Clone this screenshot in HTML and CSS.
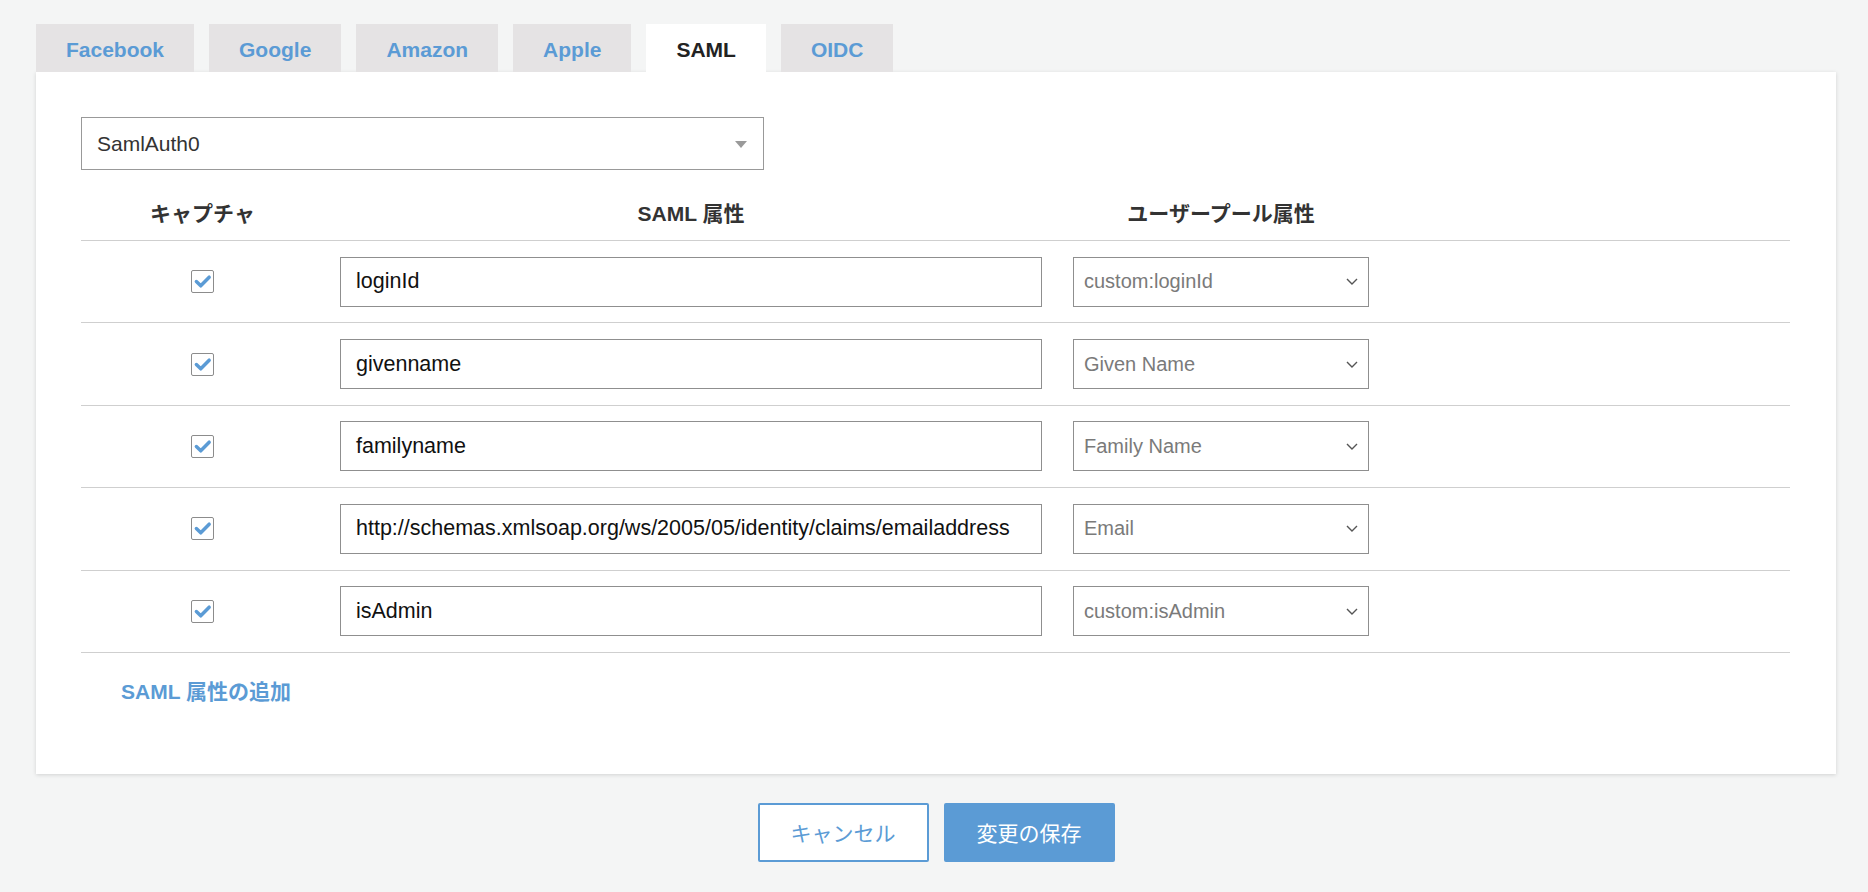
FILE: index.html
```html
<!DOCTYPE html>
<html lang="ja">
<head>
<meta charset="utf-8">
<title>SAML</title>
<link rel="stylesheet" href="styles.css">
</head>
<body>
<div class="page">
  <div class="tabs">
    <div class="tab">Facebook</div>
    <div class="tab">Google</div>
    <div class="tab">Amazon</div>
    <div class="tab">Apple</div>
    <div class="tab active">SAML</div>
    <div class="tab">OIDC</div>
  </div>
  <div class="card">
    <div class="provider-select">
      <span class="provider-value">SamlAuth0</span>
      <span class="caret"></span>
    </div>
    <div class="table">
      <div class="row head">
        <div class="cell c1">キャプチャ</div>
        <div class="cell c2">SAML 属性</div>
        <div class="cell c3">ユーザープール属性</div>
        <div class="cell"></div>
      </div>
      <div class="row">
        <div class="cell c1"><span class="checkbox"><svg viewBox="0 0 23 23" width="21" height="21"><path d="M4.8 11.5 L9.6 16.2 L18.8 6.8" fill="none" stroke="#5b9bd5" stroke-width="3.8" stroke-linecap="round" stroke-linejoin="round"/></svg></span></div>
        <div class="cell c2"><div class="text-input">loginId</div></div>
        <div class="cell c3"><div class="attr-select"><span>custom:loginId</span><svg class="chev" viewBox="0 0 12 7" width="12" height="7"><path d="M1 1 L6 6 L11 1" fill="none" stroke="#555" stroke-width="1.4"/></svg></div></div>
        <div class="cell"></div>
      </div>
      <div class="row">
        <div class="cell c1"><span class="checkbox"><svg viewBox="0 0 23 23" width="21" height="21"><path d="M4.8 11.5 L9.6 16.2 L18.8 6.8" fill="none" stroke="#5b9bd5" stroke-width="3.8" stroke-linecap="round" stroke-linejoin="round"/></svg></span></div>
        <div class="cell c2"><div class="text-input">givenname</div></div>
        <div class="cell c3"><div class="attr-select"><span>Given Name</span><svg class="chev" viewBox="0 0 12 7" width="12" height="7"><path d="M1 1 L6 6 L11 1" fill="none" stroke="#555" stroke-width="1.4"/></svg></div></div>
        <div class="cell"></div>
      </div>
      <div class="row">
        <div class="cell c1"><span class="checkbox"><svg viewBox="0 0 23 23" width="21" height="21"><path d="M4.8 11.5 L9.6 16.2 L18.8 6.8" fill="none" stroke="#5b9bd5" stroke-width="3.8" stroke-linecap="round" stroke-linejoin="round"/></svg></span></div>
        <div class="cell c2"><div class="text-input">familyname</div></div>
        <div class="cell c3"><div class="attr-select"><span>Family Name</span><svg class="chev" viewBox="0 0 12 7" width="12" height="7"><path d="M1 1 L6 6 L11 1" fill="none" stroke="#555" stroke-width="1.4"/></svg></div></div>
        <div class="cell"></div>
      </div>
      <div class="row">
        <div class="cell c1"><span class="checkbox"><svg viewBox="0 0 23 23" width="21" height="21"><path d="M4.8 11.5 L9.6 16.2 L18.8 6.8" fill="none" stroke="#5b9bd5" stroke-width="3.8" stroke-linecap="round" stroke-linejoin="round"/></svg></span></div>
        <div class="cell c2"><div class="text-input">http://schemas.xmlsoap.org/ws/2005/05/identity/claims/emailaddress</div></div>
        <div class="cell c3"><div class="attr-select"><span>Email</span><svg class="chev" viewBox="0 0 12 7" width="12" height="7"><path d="M1 1 L6 6 L11 1" fill="none" stroke="#555" stroke-width="1.4"/></svg></div></div>
        <div class="cell"></div>
      </div>
      <div class="row">
        <div class="cell c1"><span class="checkbox"><svg viewBox="0 0 23 23" width="21" height="21"><path d="M4.8 11.5 L9.6 16.2 L18.8 6.8" fill="none" stroke="#5b9bd5" stroke-width="3.8" stroke-linecap="round" stroke-linejoin="round"/></svg></span></div>
        <div class="cell c2"><div class="text-input">isAdmin</div></div>
        <div class="cell c3"><div class="attr-select"><span>custom:isAdmin</span><svg class="chev" viewBox="0 0 12 7" width="12" height="7"><path d="M1 1 L6 6 L11 1" fill="none" stroke="#555" stroke-width="1.4"/></svg></div></div>
        <div class="cell"></div>
      </div>
    </div>
    <div class="add-link">SAML 属性の追加</div>
  </div>
  <div class="actions">
    <button class="btn cancel">キャンセル</button>
    <button class="btn save">変更の保存</button>
  </div>
</div>
</body>
</html>
```

FILE: styles.css
```css
* { box-sizing: border-box; }

html, body {
  margin: 0;
  padding: 0;
  background: #f4f5f5;
  font-family: "Liberation Sans", "Noto Sans CJK JP", sans-serif;
  color: #333;
}

.page {
  padding: 24px 32px 0 36px;
}

.tabs {
  display: flex;
  gap: 15px;
}

.tab {
  height: 48px;
  padding: 4px 30px 0;
  display: flex;
  align-items: center;
  background: #e5e3e4;
  color: #5b9bd5;
  font-size: 21px;
  font-weight: bold;
}

.tab.active {
  background: #fff;
  color: #222;
}

.card {
  background: #fff;
  width: 1800px;
  padding: 45px 46px 70px 45px;
  box-shadow: 0 1px 4px rgba(0, 0, 0, 0.14);
}

.provider-select {
  width: 683px;
  height: 53px;
  border: 1px solid #999;
  display: flex;
  align-items: center;
  justify-content: space-between;
  padding: 0 16px 0 15px;
  font-size: 21px;
  color: #333;
}

.caret {
  width: 0;
  height: 0;
  border-left: 6.5px solid transparent;
  border-right: 6.5px solid transparent;
  border-top: 7px solid #9a9a9a;
  margin-top: 2px;
}

.row {
  display: grid;
  grid-template-columns: 243px 734px 326px 1fr;
  align-items: center;
  border-bottom: 1px solid #cfcfcf;
  padding: 15.7px 0;
}

.row.head {
  height: 71px;
  padding: 17px 0 0;
  font-size: 21px;
  font-weight: bold;
  color: #333;
}

.row.head .cell {
  text-align: center;
  line-height: 24px;
}

.cell.c1 {
  display: flex;
  justify-content: center;
}

.row.head .cell.c1 { display: block; }

.cell.c2 { padding: 0 16px; }
.cell.c3 { padding: 0 15px; }

.checkbox {
  width: 23px;
  height: 23px;
  border: 1px solid #8c8c8c;
  border-radius: 2px;
  display: flex;
  align-items: center;
  justify-content: center;
  background: #fff;
}

.text-input {
  height: 50px;
  border: 1px solid #8f8f8f;
  display: flex;
  align-items: center;
  padding: 0 15px;
  font-size: 21.5px;
  color: #111;
  white-space: nowrap;
  overflow: hidden;
}

.attr-select {
  height: 50px;
  border: 1px solid #8f8f8f;
  display: flex;
  align-items: center;
  justify-content: space-between;
  padding: 0 10px 0 10px;
  font-size: 20px;
  color: #7a7a7a;
}

.chev { display: block; }

.add-link {
  margin-top: 27px;
  padding-left: 40px;
  line-height: 24px;
  font-size: 21px;
  font-weight: bold;
  color: #5b9bd5;
}

.actions {
  display: flex;
  justify-content: center;
  gap: 15px;
  margin-top: 29px;
}

.btn {
  width: 171px;
  height: 59px;
  border: 2.5px solid #5b9bd5;
  border-radius: 2px;
  font-family: "Noto Sans CJK JP", sans-serif;
  font-size: 21px;
  padding: 0;
}

.btn.cancel {
  background: #fff;
  color: #5b9bd5;
}

.btn.save {
  background: #5b9bd5;
  color: #fff;
}
```
